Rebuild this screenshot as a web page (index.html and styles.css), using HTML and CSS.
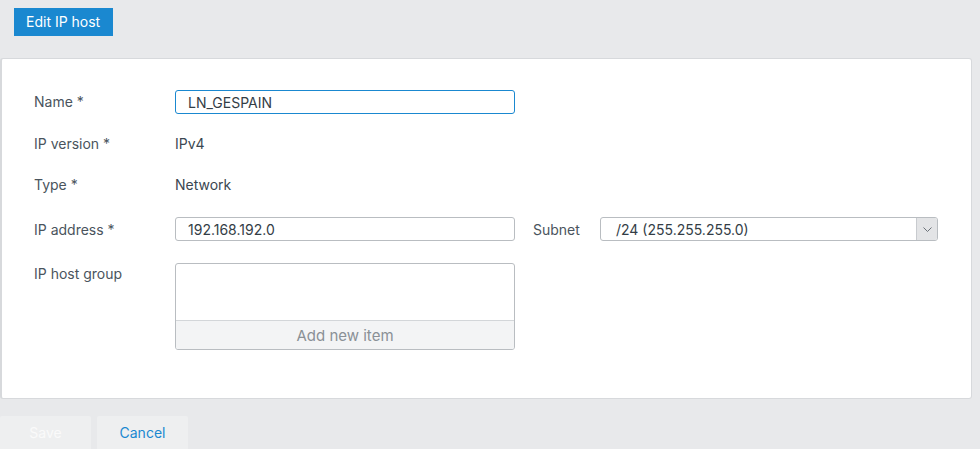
FILE: index.html
```html
<!DOCTYPE html>
<html lang="en">
<head>
  <meta charset="UTF-8" />
  <title>Edit IP host</title>
  <link rel="stylesheet" href="styles.css">
</head>
<body>
  <div class="page-header">
    <span class="title-tab">Edit IP host</span>
  </div>

  <div class="panel">
    <div class="row row-name">
      <label class="label">Name *</label>
      <div class="field">
        <input class="text-input focused" type="text" value="LN_GESPAIN" />
      </div>
    </div>
    <div class="row row-version">
      <label class="label">IP version *</label>
      <div class="value">IPv4</div>
    </div>
    <div class="row row-type">
      <label class="label">Type *</label>
      <div class="value">Network</div>
    </div>
    <div class="row row-address">
      <label class="label">IP address *</label>
      <div class="field">
        <input class="text-input" type="text" value="192.168.192.0" />
      </div>
      <label class="sub-label">Subnet</label>
      <div class="select">
        <span class="select-text">/24 (255.255.255.0)</span>
        <span class="select-arrow">
          <svg width="9" height="5" viewBox="0 0 9 5"><path d="M0.5 0.5 L4.5 4.5 L8.5 0.5" fill="none" stroke="#6b7178" stroke-width="1"/></svg>
        </span>
      </div>
    </div>
    <div class="row row-group">
      <label class="label">IP host group</label>
      <div class="list-box">
        <div class="list-items"></div>
        <div class="list-add">Add new item</div>
      </div>
    </div>
  </div>

  <div class="footer">
    <button class="btn btn-save" disabled>Save</button>
    <button class="btn btn-cancel">Cancel</button>
  </div>
</body>
</html>
```

FILE: styles.css
```css
* {
  margin: 0;
  padding: 0;
  box-sizing: border-box;
  font-family: Inter, 'Noto Sans', sans-serif;
}

body {
  background: #e8e9eb;
  color: #3b4751;
  font-size: 14px;
  height: 449px;
  overflow: hidden;
}

.page-header {
  padding: 8px 14px 0;
  height: 58px;
}

.title-tab {
  display: inline-block;
  height: 28px;
  line-height: 28px;
  padding: 0 13px 0 12px;
  background: #1a88d0;
  color: #fff;
  font-size: 14px;
}

.panel {
  width: 972px;
  height: 341px;
  background: #fff;
  border: 1px solid #d7d9dc;
  border-left: 2px solid #d7d9dc;
  border-radius: 3px;
  padding: 31px 0 0 32px;
}

.row {
  display: flex;
  align-items: center;
  height: 24px;
}

.row-name .label { margin-top: -2px; }
.row-version { margin-top: 17px; }
.row-type { margin-top: 17px; }
.row-address { margin-top: 21px; }
.row-group {
  margin-top: 22px;
  height: auto;
  align-items: flex-start;
}

.label {
  width: 141px;
  color: #4a545d;
}

.row-group .label {
  line-height: 20px;
  margin-top: 1px;
}

.value {
  color: #3b4751;
}

.field {
  width: 340px;
}

.text-input {
  width: 100%;
  height: 24px;
  border: 1px solid #b9bdc1;
  border-radius: 3px;
  padding: 0 12px;
  font-size: 14px;
  color: #333d46;
  background: #fff;
  outline: none;
}

.text-input.focused {
  border-color: #1a88d0;
}

.sub-label {
  margin-left: 18px;
  width: 67px;
  color: #4a545d;
}

.select {
  width: 338px;
  height: 24px;
  border: 1px solid #b9bdc1;
  border-radius: 3px;
  display: flex;
  align-items: center;
  overflow: hidden;
}

.select-text {
  flex: 1;
  padding-left: 15px;
  color: #333d46;
}

.select-arrow {
  width: 21px;
  height: 100%;
  background: #e3e4e6;
  border-left: 1px solid #c8cbcf;
  display: flex;
  align-items: center;
  justify-content: center;
}

.list-box {
  width: 340px;
  height: 87px;
  border: 1px solid #b9bdc1;
  border-radius: 3px;
  display: flex;
  flex-direction: column;
  overflow: hidden;
}

.list-items {
  flex: 1;
  border-bottom: 1px solid #d3d6d9;
}

.list-add {
  height: 28px;
  line-height: 30px;
  background: #f3f4f5;
  color: #8a9096;
  text-align: center;
  font-size: 15px;
}

.footer {
  display: flex;
  gap: 6px;
  margin-top: 17px;
}

.btn {
  width: 91px;
  height: 34px;
  border: none;
  border-radius: 2px;
  background: #eeeff0;
  font-size: 14px;
  padding-bottom: 1px;
}

.btn-save {
  color: #fafafa;
}

.btn-cancel {
  color: #1a88d0;
  cursor: pointer;
}
```
